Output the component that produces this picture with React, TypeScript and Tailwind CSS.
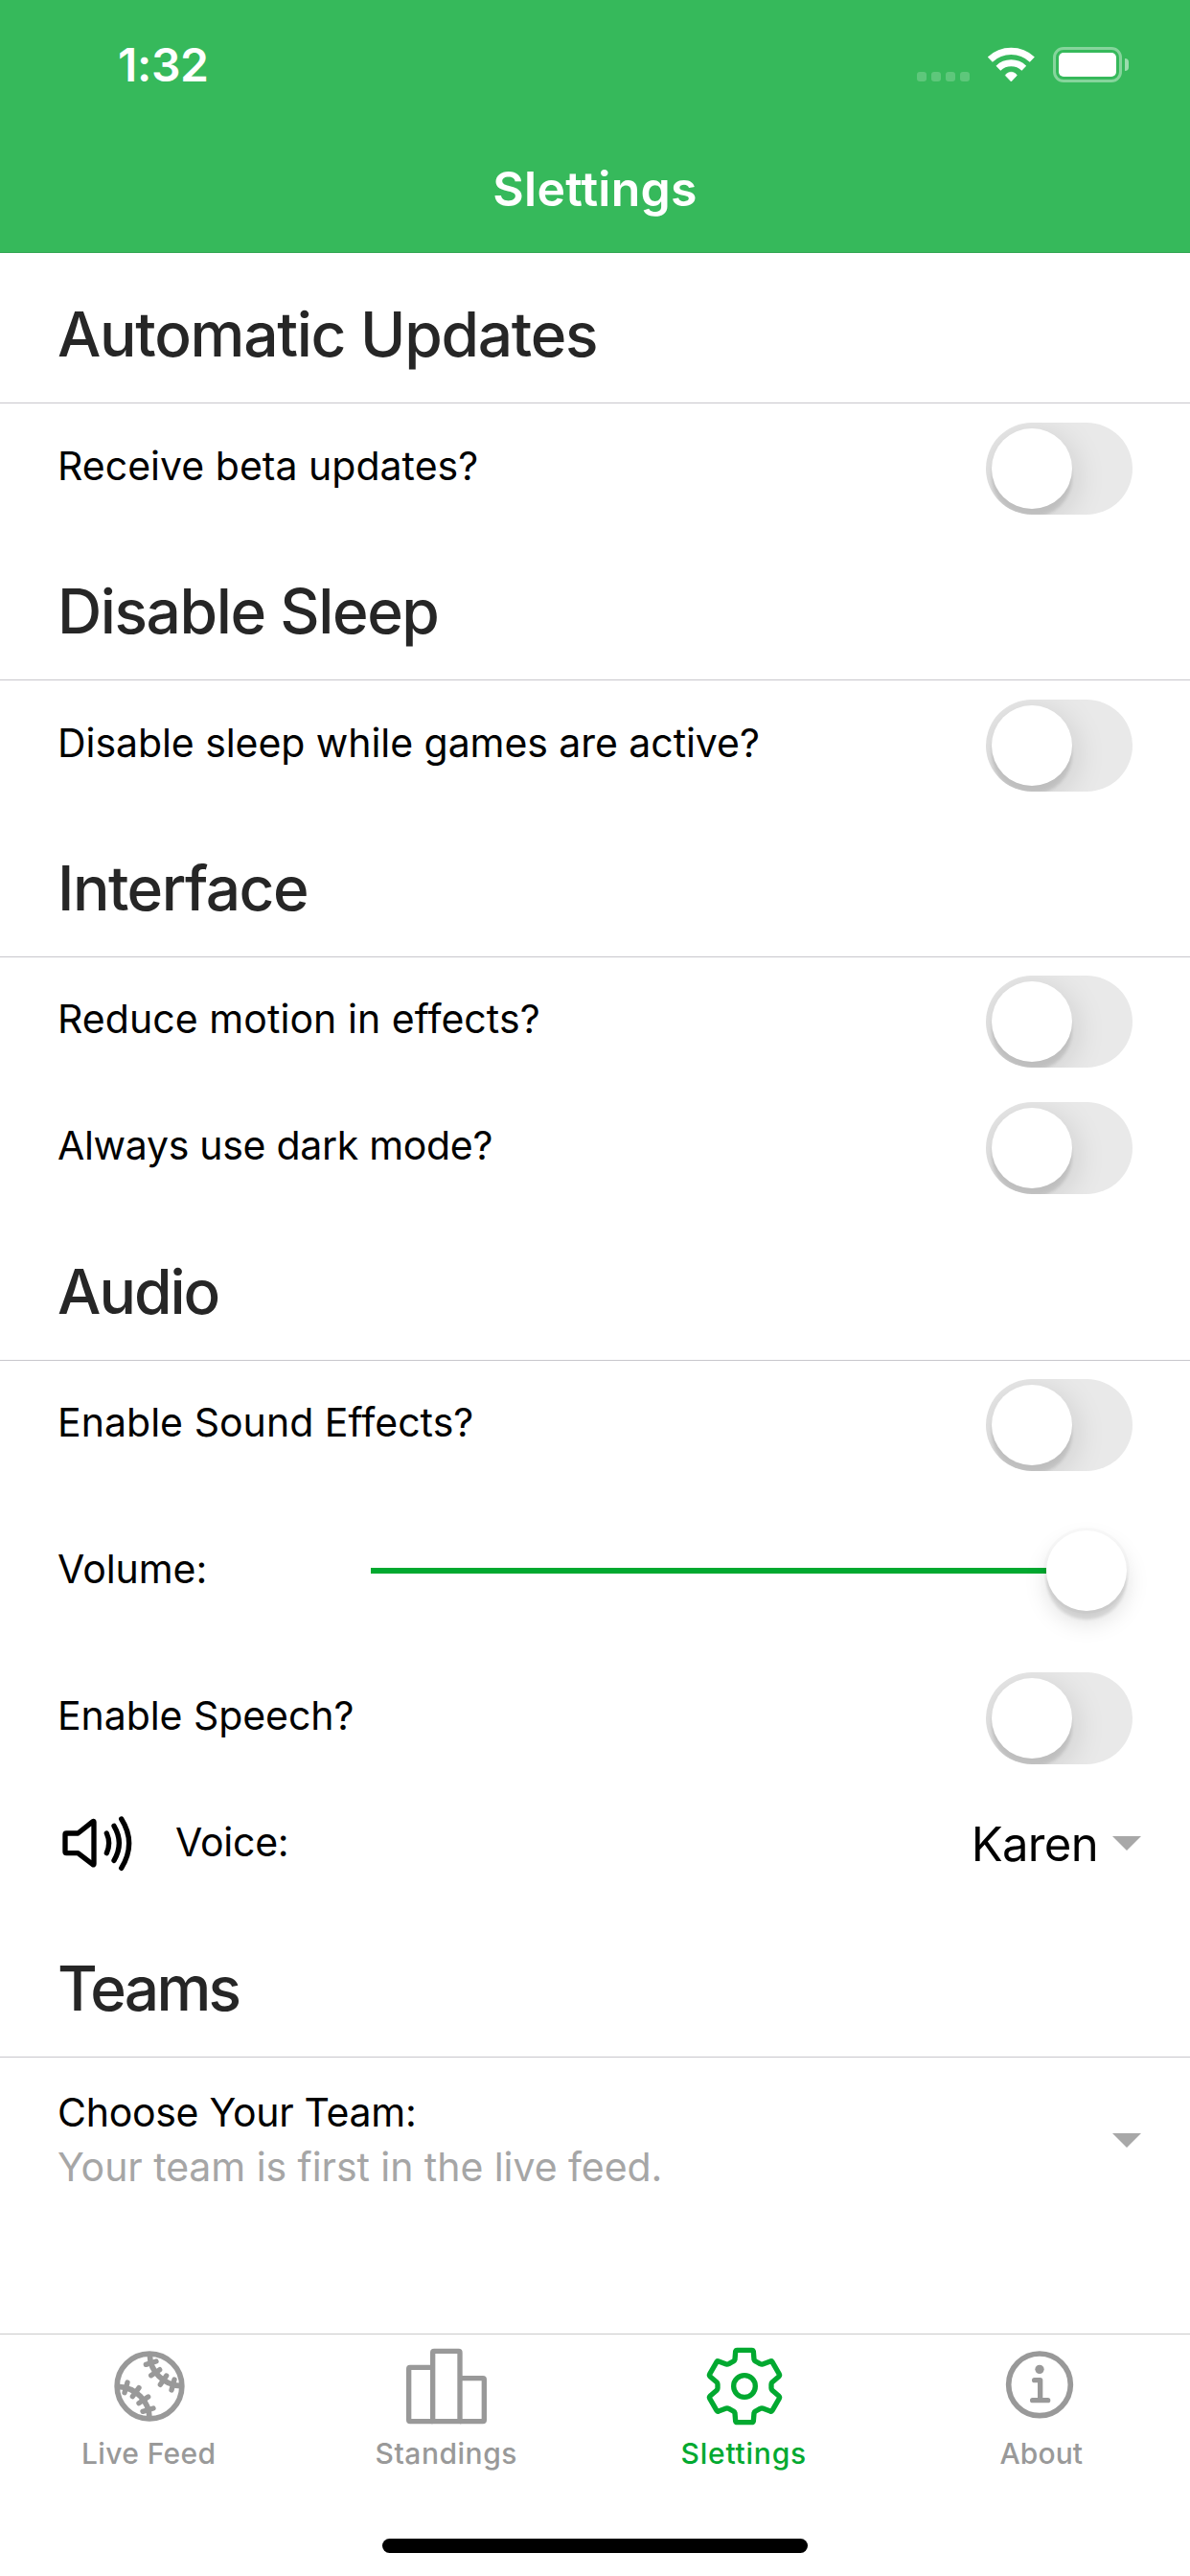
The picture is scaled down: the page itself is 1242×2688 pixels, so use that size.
import React from "react";

function Toggle() {
  return (
    <button role="switch" aria-checked="false" className="relative h-24 w-[153px] shrink-0 overflow-hidden rounded-full bg-[#e9e9e9] p-1.5">
      <span className="block size-[84px] rounded-full bg-white shadow-[0_9px_36px_rgba(0,0,0,0.16),0_9px_3px_rgba(0,0,0,0.1)]" />
    </button>
  );
}

function SectionHeader({ title, className }: { title: string; className: string }) {
  return (
    <div className="flex h-[157px] items-center border-b border-[#c8c7cc] pt-3.5 pl-[60px]">
      <h2 className={`text-[64px] leading-[80px] font-medium whitespace-nowrap text-[#262626] ${className}`}>{title}</h2>
    </div>
  );
}

function ToggleRow({ label, className = "tracking-[-0.06px]", pad = "pb-0" }: { label: string; className?: string; pad?: string }) {
  return (
    <div className={`flex h-[132px] items-center justify-between px-[60px] ${pad}`}>
      <span className={`-mt-0.5 text-[41px] leading-[56px] whitespace-nowrap ${className}`}>{label}</span>
      <div className="pt-1">
        <Toggle />
      </div>
    </div>
  );
}

function Caret() {
  return (
    <svg width="30" height="15" viewBox="0 0 30 15" className="shrink-0">
      <path d="M0 0H30L15 15Z" fill="#a8a8a8" />
    </svg>
  );
}

function SpeakerIcon() {
  return (
    <svg width="80" height="64" viewBox="35 40 240 192" fill="none" stroke="#000" strokeWidth="16" strokeLinecap="round" strokeLinejoin="round">
      <path d="M53 107Q53 103 57 103H93L140 66Q143 64 143 68V199Q143 203 140 201L93 165H57Q53 165 53 161Z" />
      <path d="M183 103Q197 134 183 165M206 80Q238 134 206 188M229 58Q277 134 229 212" />
    </svg>
  );
}

function WifiIcon() {
  return (
    <svg width="50.67" height="40" viewBox="270 20 152 120" fill="none" stroke="#fff">
      <path d="M280 65.4A96 96 0 0 1 412 65.4" strokeWidth="22" />
      <path d="M305.7 92.6A58.5 58.5 0 0 1 386.3 92.6" strokeWidth="21" />
      <path d="M346 134L328 115A21 21 0 0 1 364 115Z" fill="#fff" strokeWidth="2" strokeLinejoin="round" />
    </svg>
  );
}

function BallIcon() {
  return (
    <svg width="80" height="80" viewBox="168 90 240 240" fill="none" stroke="currentColor" strokeLinecap="round">
      <circle cx="288" cy="210" r="101.5" strokeWidth="17" />
      <path d="M289 112C290 163 331 206 386 209M190 211C246 214 287 257 288 308" strokeWidth="17" />
      <path
        d="M277 142L309 132M293 176L320 158M322 205L341 177M357 222L366 189M219 198L210 230M255 215L235 242M284 243L255 263M300 279L267 289"
        strokeWidth="16"
      />
    </svg>
  );
}

function StandingsIcon() {
  return (
    <svg width="90" height="84" viewBox="1080 84 270 252" fill="none" stroke="currentColor" strokeWidth="16" strokeLinejoin="round">
      <path d="M1172 151H1101Q1097 151 1097 155V316Q1097 320 1101 320H1172" />
      <path d="M1172 320V104Q1172 100 1176 100H1253Q1257 100 1257 104V320Z" />
      <path d="M1257 185H1329Q1333 185 1333 189V316Q1333 320 1329 320H1257" />
    </svg>
  );
}

function GearIcon() {
  return (
    <svg width="84" height="84" viewBox="165 84 252 252" fill="none" stroke="currentColor" strokeWidth="16" strokeLinejoin="round">
      <circle cx="291" cy="210" r="34" />
      <path d="M268 97H314Q318 97 319 101L321 126Q322 130 326 132L340 140Q344 142 348 141L372 132Q376 130 378 134L400 172Q402 176 399 179L378 197Q375 200 375 204V216Q375 220 378 223L399 241Q402 244 400 248L378 286Q376 290 372 288L348 279Q344 278 340 280L326 288Q322 290 321 294L319 319Q318 323 314 323H268Q264 323 263 319L261 294Q260 290 256 288L242 280Q238 278 234 279L210 288Q206 290 204 286L182 248Q180 244 183 241L204 223Q207 220 207 216V204Q207 200 204 197L183 179Q180 176 182 172L204 134Q206 130 210 132L234 141Q238 142 242 140L256 132Q260 130 261 126L263 101Q264 97 268 97Z" />
    </svg>
  );
}

function InfoIcon() {
  return (
    <svg width="76" height="76" viewBox="1100 96 228 228" fill="none" stroke="currentColor" strokeLinecap="round" strokeLinejoin="round">
      <circle cx="1214" cy="205" r="97" strokeWidth="17" />
      <circle cx="1214" cy="157" r="14" fill="currentColor" stroke="none" />
      <path d="M1198 191H1216V254M1192 254H1240" strokeWidth="16" />
    </svg>
  );
}

const tabs = [
  { label: "Live Feed", icon: <BallIcon />, tone: "text-[#999999]", tracking: "tracking-[0.37px]", nudge: "pl-0.5" },
  { label: "Standings", icon: <StandingsIcon />, tone: "text-[#999999]", tracking: "tracking-[0.51px]", nudge: "" },
  { label: "Slettings", icon: <GearIcon />, tone: "text-[#02a930]", tracking: "tracking-[0.78px]", nudge: "pl-0.5" },
  { label: "About", icon: <InfoIcon />, tone: "text-[#999999]", tracking: "tracking-[0.08px]", nudge: "pr-1" },
];

export default function App() {
  return (
    <div className="flex h-[2688px] w-[1242px] flex-col overflow-hidden bg-white font-[Inter,sans-serif] text-black">
      <header className="h-[264px] shrink-0 border-b border-[#32a653] bg-[#36b95b] text-white">
        <div className="flex h-[132px] items-start justify-between pr-16 pl-[123px]">
          <span className="mt-[38px] text-[48px] leading-[60px] font-semibold tracking-[-0.35px]">1:32</span>
          <div className="mt-[47px] flex items-start">
            <div className="mt-7 flex gap-[5px]">
              {[0, 1, 2, 3].map((i) => (
                <span key={i} className="size-2.5 rounded-[3px] bg-white/20" />
              ))}
            </div>
            <div className="ml-[18px]">
              <WifiIcon />
            </div>
            <div className="mt-0.5 ml-[18px] flex items-center">
              <div className="h-[37px] w-[72px] rounded-[11px] border-3 border-white/40 p-[3px]">
                <div className="h-[25px] rounded-[5px] bg-white" />
              </div>
              <span className="ml-[3px] h-[13px] w-1 rounded-r-full bg-white/50" />
            </div>
          </div>
        </div>
        <h1 className="h-[131px] text-center text-[50px] leading-[131px] font-semibold tracking-[0.22px]">Slettings</h1>
      </header>

      <main className="h-[2171px] shrink-0">
        <SectionHeader title="Automatic Updates" className="tracking-[-1.27px]" />
        <ToggleRow label="Receive beta updates?" className="tracking-[0.02px]" />
        <SectionHeader title="Disable Sleep" className="tracking-[-1.4px]" />
        <ToggleRow label="Disable sleep while games are active?" />
        <SectionHeader title="Interface" className="tracking-[-1.5px]" />
        <ToggleRow label="Reduce motion in effects?" className="tracking-[0.06px]" pad="pb-0.5" />
        <ToggleRow label="Always use dark mode?" className="tracking-[-0.3px]" pad="pb-0.5" />
        <SectionHeader title="Audio" className="tracking-[-2px]" />
        <ToggleRow label="Enable Sound Effects?" className="tracking-[0.04px]" pad="pb-0.5" />
        <div className="flex h-[174px] items-center pr-[66px] pl-[60px]">
          <span className="-mt-1 w-[327px] text-[41px] leading-[56px] tracking-[-0.06px]">Volume:</span>
          <div className="flex flex-1 items-center">
            <div className="h-1.5 flex-1 bg-[#02a930]" />
            <div className="size-[84px] rounded-full bg-white shadow-[0_9px_3px_rgba(0,0,0,0.1),0_12px_24px_rgba(0,0,0,0.13),0_0_0_3px_rgba(0,0,0,0.02)]" />
          </div>
        </div>
        <ToggleRow label="Enable Speech?" pad="pb-0.5" />
        <div className="flex h-[132px] items-center pr-[51px] pl-[62px]">
          <SpeakerIcon />
          <span className="-mt-1 ml-[41px] flex-1 text-[41px] leading-[56px] tracking-[-0.25px]">Voice:</span>
          <span className="mt-0.5 mr-[15px] text-[49px] leading-[60px] tracking-[-0.66px]">Karen</span>
          <div className="pb-0.5">
            <Caret />
          </div>
        </div>
        <SectionHeader title="Teams" className="tracking-[-2.65px]" />
        <div className="flex h-[178px] items-center justify-between pr-[51px] pl-[60px]">
          <div className="-mt-1.5 text-[41px] leading-[57px]">
            <p className="tracking-[-0.28px]">Choose Your Team:</p>
            <p className="tracking-[-0.06px] text-[#a6a6a6]">Your team is first in the live feed.</p>
          </div>
          <div className="pb-1.5">
            <Caret />
          </div>
        </div>
      </main>

      <nav className="grid h-[209px] shrink-0 grid-cols-4 border-t border-[#cacaca]">
        {tabs.map((t) => (
          <button key={t.label} className={`flex h-[209px] flex-col items-center pt-3 ${t.tone}`}>
            <span className={`flex h-[84px] items-center ${t.nudge}`}>{t.icon}</span>
            <span className={`mt-2 text-[30px] leading-[40px] font-medium ${t.tracking}`}>{t.label}</span>
          </button>
        ))}
      </nav>
      <div className="-mt-px flex h-11 shrink-0 justify-center pt-[6px]">
        <div className="h-[15px] w-[444px] rounded-full bg-black" />
      </div>
    </div>
  );
}
